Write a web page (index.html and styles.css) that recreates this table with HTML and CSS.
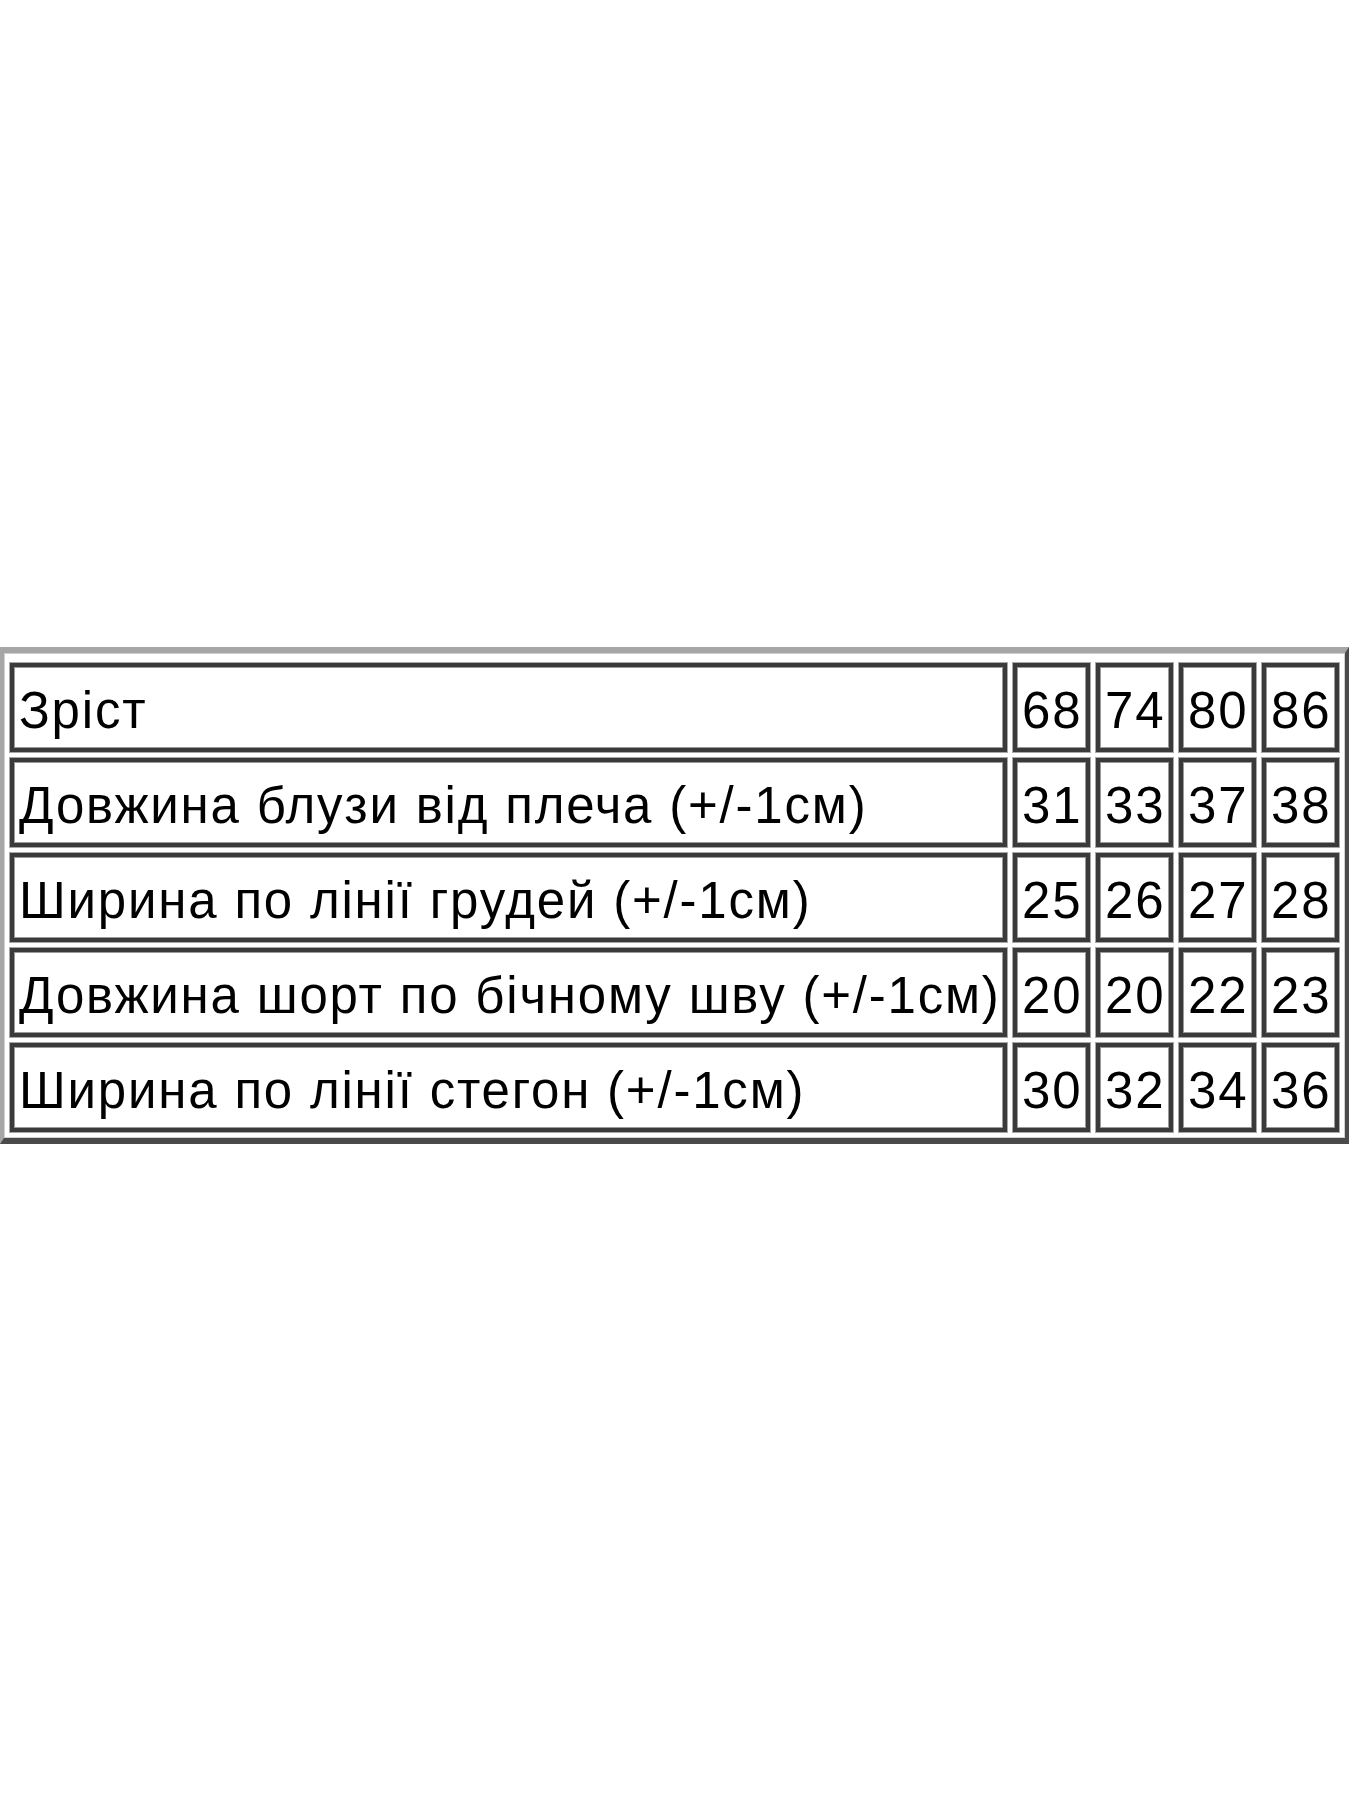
FILE: index.html
```html
<!DOCTYPE html>
<html lang="uk">
<head>
<meta charset="utf-8">
<title>Розміри</title>
<link rel="stylesheet" href="styles.css">
</head>
<body>
<table class="sizes">
  <tr>
    <td class="label">Зріст</td>
    <td class="num">68</td>
    <td class="num">74</td>
    <td class="num">80</td>
    <td class="num">86</td>
  </tr>
  <tr>
    <td class="label">Довжина блузи від плеча (+/-1см)</td>
    <td class="num">31</td>
    <td class="num">33</td>
    <td class="num">37</td>
    <td class="num">38</td>
  </tr>
  <tr>
    <td class="label">Ширина по лінії грудей (+/-1см)</td>
    <td class="num">25</td>
    <td class="num">26</td>
    <td class="num">27</td>
    <td class="num">28</td>
  </tr>
  <tr>
    <td class="label">Довжина шорт по бічному шву (+/-1см)</td>
    <td class="num">20</td>
    <td class="num">20</td>
    <td class="num">22</td>
    <td class="num">23</td>
  </tr>
  <tr>
    <td class="label">Ширина по лінії стегон (+/-1см)</td>
    <td class="num">30</td>
    <td class="num">32</td>
    <td class="num">34</td>
    <td class="num">36</td>
  </tr>
</table>
</body>
</html>
```

FILE: styles.css
```css
html, body {
  margin: 0;
  padding: 0;
  background: #ffffff;
}

body {
  font-family: "Liberation Sans", Arial, sans-serif;
  color: #000000;
}

.sizes {
  margin-top: 647px;
  table-layout: fixed;
  border-collapse: separate;
  border-spacing: 6px 6.6px;
  border-style: solid;
  border-width: 6px 4px 6px 4px;
  border-color: #a6a6a6 #4a4a4a #4a4a4a #a6a6a6;
  padding-top: 4px;
  box-shadow: inset 0 0 0 1px #d0d0d0;
}

.sizes td {
  height: 75px;
  padding: 6px 0 0 5px;
  border: 4px solid #3a3a3a;
  box-shadow: 0 0 0 1px #a8a8a8, inset 0 0 0 1px #9a9a9a;
  font-size: 51px;
  line-height: 1;
  letter-spacing: 1.8px;
  white-space: nowrap;
  vertical-align: middle;
  overflow: hidden;
}

.sizes td.label {
  width: 984px;
}

.sizes td.num {
  width: 64px;
  padding-left: 5px;
  letter-spacing: 2px;
}
```
